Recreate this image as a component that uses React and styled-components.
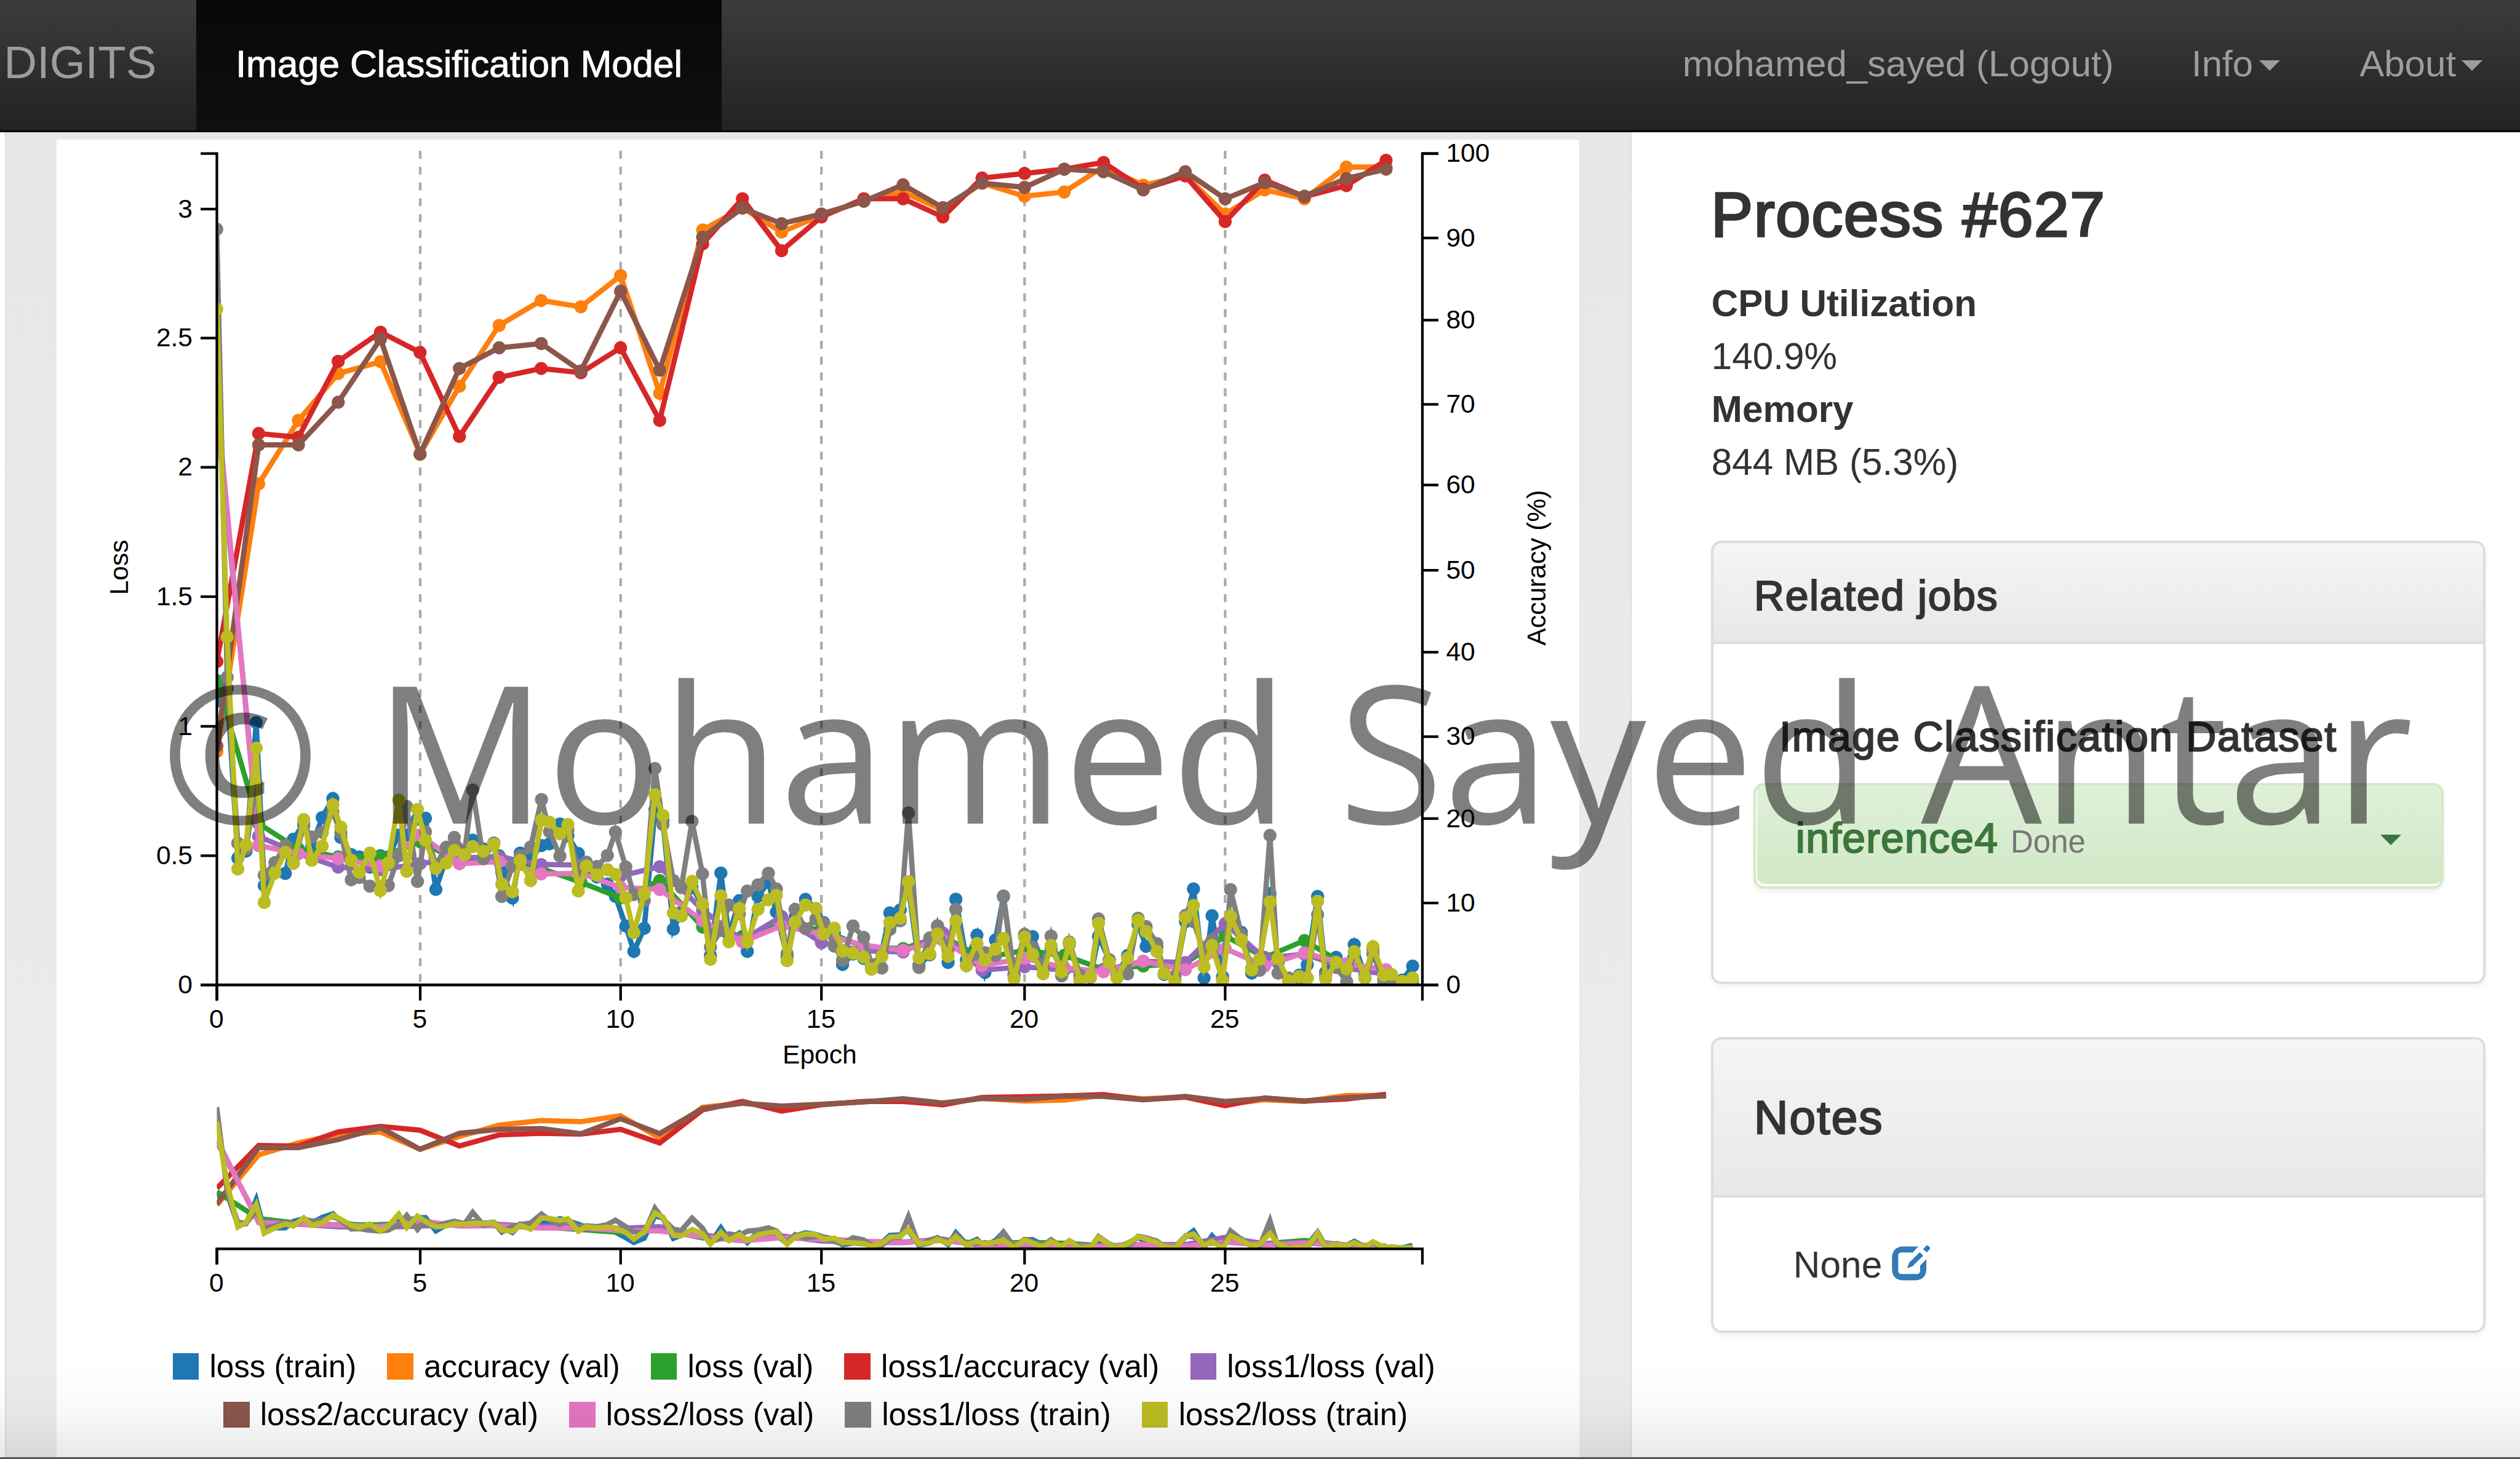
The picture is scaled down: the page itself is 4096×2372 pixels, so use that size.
import React from 'react';
import styled, { createGlobalStyle } from 'styled-components';

const Global = createGlobalStyle`
  html { font-size: 68.6442px; }
  body { margin: 0; background: #fff; color: #333; font-family: "Liberation Sans", Arial, sans-serif; }
  * { box-sizing: border-box; }
`;

const Page = styled.div`
  position: relative;
  display: flex;
  flex-direction: column;
  width: 100vw;
  height: 100vh;
  overflow: hidden;
  font-size: 0.877rem;
`;

/* ---------- navbar ---------- */
const Navbar = styled.nav`
  display: flex;
  flex: none;
  height: 3.13rem;
  border-bottom: 0.05rem solid #080808;
  background: linear-gradient(#3c3c3c, #222);
  color: #9d9d9d;
`;
const Brand = styled.div`
  display: flex;
  align-items: center;
  width: 4.65rem;
  padding: 0 0 0.12rem 0.09rem;
  font-size: 1.085rem;
`;
const NavLink = styled.div`
  display: flex;
  align-items: center;
  justify-content: ${(p) => (p.$active ? 'center' : 'flex-start')};
  width: ${(p) => p.$width}rem;
  padding-bottom: 0.06rem;
  white-space: nowrap;
  font-size: ${(p) => (p.$active ? 0.885 : 0.875)}rem;
  -webkit-text-stroke: ${(p) => (p.$active ? 0.016 : 0)}em currentColor;
  color: ${(p) => (p.$active ? '#fff' : 'inherit')};
  background: ${(p) => (p.$active ? 'linear-gradient(#080808, #0f0f0f)' : 'none')};
`;
const NavRight = styled.div`
  display: flex;
  margin-left: auto;
`;
const Caret = styled.span`
  flex: none;
  width: 0;
  height: 0;
  margin-left: ${(p) => p.$gap || 0}rem;
  margin-top: 0.09rem;
  border-left: 0.25rem solid transparent;
  border-right: 0.25rem solid transparent;
  border-top: 0.25rem solid currentColor;
`;

/* ---------- body ---------- */
const Main = styled.main`
  display: flex;
  flex: 1;
  min-height: 0;
`;
const Well = styled.section`
  flex: none;
  width: 38.53rem;
  margin-left: 0.11rem;
  padding: 0.17rem 1.23rem 0 1.2rem;
  border-left: 0.04rem solid #dedede;
  border-right: 0.04rem solid #dcdcdc;
  background: linear-gradient(#e7e7e7, #ececec);
`;
const ChartCard = styled.div`
  height: 100%;
  width: 36.06rem;
  background: #fff;
`;
const ChartSvg = styled.svg`
  display: block;
  width: 36.06rem;
  height: 28rem;
  font-family: "Liberation Sans", Arial, sans-serif;
  font-size: 62px;
`;
const Legend = styled.div`
  display: flex;
  flex-direction: column;
  gap: 0.3rem;
  padding-top: 0.645rem;
`;
const LegendRow = styled.div`
  display: flex;
  gap: 0.73rem;
  padding-left: ${(p) => p.$indent}rem;
`;
const LegendItem = styled.div`
  display: flex;
  align-items: center;
  gap: 0.25rem;
  height: 0.84rem;
  font-size: 0.746rem;
  color: #000;
  white-space: nowrap;
`;
const Swatch = styled.span`
  width: 0.62rem;
  height: 0.62rem;
  background: ${(p) => p.$color};
`;

/* ---------- sidebar ---------- */
const Sidebar = styled.aside`
  width: 20.23rem;
  padding: 1.135rem 0 0 1.875rem;
`;
const Heading = styled.h3`
  margin: 0;
  font-size: ${(p) => p.$size}rem;
  font-weight: 400;
  line-height: 1.1;
  letter-spacing: ${(p) => p.$track}em;
  white-space: nowrap;
  -webkit-text-stroke: 0.032em currentColor;
`;
const Stats = styled.dl`
  margin: 0.67rem 0 1.225rem 0.01rem;
  line-height: 1.25rem;
`;
const Term = styled.dt`
  font-weight: 700;
`;
const Value = styled.dd`
  margin: 0;
`;
const Panel = styled.section`
  width: 18.34rem;
  height: ${(p) => p.$height}rem;
  margin-bottom: 1.26rem;
  border: 0.06rem solid #ddd;
  border-radius: 0.25rem;
  box-shadow: 0 0.06rem 0.12rem rgba(0, 0, 0, 0.05);
  background: #fff;
`;
const PanelHead = styled.header`
  height: ${(p) => p.$height}rem;
  padding: ${(p) => p.$top}rem 0 0 0.96rem;
  border-bottom: 0.06rem solid #ddd;
  border-radius: 0.19rem 0.19rem 0 0;
  background: linear-gradient(#f5f5f5, #e8e8e8);
`;
const JobGroup = styled.div`
  padding: 1.65rem 0.94rem 0;
`;
const JobTitle = styled.div`
  padding: 0 0 0.56rem 0.62rem;
`;
const JobItem = styled.a`
  display: flex;
  align-items: center;
  height: 2.5rem;
  padding: 0.1rem 0.94rem 0 0.95rem;
  border: 0.06rem solid #d6e9c6;
  border-radius: 0.25rem;
  color: #3c763d;
  background: linear-gradient(#dff0d8, #d0e9c6);
  box-shadow: inset 0.03rem -0.06rem 0 #fafdf8, 0 0.06rem 0.12rem rgba(0, 0, 0, 0.06);
`;
const JobLabel = styled.div`
  display: flex;
  flex: 1;
  align-items: baseline;
  gap: 0.285rem;
`;
const JobStatus = styled.small`
  font-size: 0.744rem;
  color: #777;
`;
const NoteBody = styled.div`
  display: flex;
  align-items: center;
  height: 1.257rem;
  margin: 0.95rem 0 0 1.89rem;
  font-size: 0.88rem;
`;
const EditIcon = styled.svg`
  width: 0.94rem;
  height: 0.84rem;
  margin: 0 0 0.08rem 0.21rem;
`;

/* ---------- overlays ---------- */
const Watermark = styled.div`
  position: absolute;
  left: 3.8rem;
  top: 14.657rem;
  display: flex;
  gap: 1.285rem;
  font-family: "Open Sans", "Noto Sans", sans-serif;
  font-size: 4.54rem;
  line-height: 1.3618;
  white-space: nowrap;
  color: rgba(0, 0, 0, 0.5);
  pointer-events: none;
`;
const BottomShade = styled.div`
  position: absolute;
  left: 0;
  right: 0;
  bottom: 0;
  height: 2.3rem;
  border-bottom: 0.05rem solid #5a5658;
  background: linear-gradient(rgba(0, 0, 0, 0), rgba(0, 0, 0, 0.025) 50%, rgba(0, 0, 0, 0.085));
  pointer-events: none;
`;

/* ---------- chart data (chart units) ---------- */
const X0 = 513.5;
const X1 = 3368;
const Y0 = 2333;

const epochX = [
  513.5, 612.5, 706.6, 800.8, 901, 994.6, 1087.8, 1181.9, 1281.4, 1375.5, 1469.5, 1562, 1663.8, 1757.9, 1850.7,
  1945, 2045.5, 2138.4, 2232.5, 2325.3, 2426, 2520, 2613, 2707, 2806.5, 2901, 2994.7, 3088.8, 3188, 3282,
];

const val = {
  accuracy: [1780, 1146, 996, 885, 857, 1075, 915, 771, 712, 727, 653, 932, 545, 493, 550, 510, 475, 455, 498, 434, 465, 455, 395, 439, 416, 507, 450, 471, 396, 396],
  loss: [1612, 1951, 2011, 2030, 2030, 1994, 2040, 2027, 2057, 2090, 2127, 2086, 2196, 2218, 2191, 2202, 2243, 2247, 2217, 2270, 2251, 2263, 2296, 2288, 2282, 2217, 2268, 2228, 2287, 2300],
  accuracy1: [1567, 1027, 1036, 856, 787, 835, 1034, 894, 873, 883, 824, 996, 578, 471, 594, 514, 471, 471, 514, 422, 411, 401, 385, 448, 417, 525, 427, 466, 440, 380],
  loss1: [980, 1981, 2022, 2054, 2060, 2046, 2032, 2030, 2048, 2049, 2075, 2053, 2156, 2227, 2171, 2233, 2252, 2255, 2210, 2298, 2290, 2298, 2298, 2277, 2280, 2188, 2270, 2260, 2293, 2308],
  accuracy2: [1767, 1054, 1054, 953, 803, 1076, 873, 824, 814, 879, 690, 877, 562, 493, 530, 507, 477, 438, 492, 434, 444, 401, 407, 450, 407, 471, 433, 465, 423, 401],
  loss2: [950, 2003, 2022, 2034, 2051, 1978, 2046, 2041, 2070, 2069, 2102, 2107, 2181, 2231, 2193, 2212, 2239, 2251, 2227, 2287, 2270, 2292, 2302, 2277, 2297, 2247, 2288, 2257, 2283, 2297],
};

/* Training samples in blocks: [x, loss, loss1, loss2], each block with its own origin and step. */
const trainBlocks = [
  {
    ox: 450, oy: 1550, sx: 0.574, sy: 0.5421,
    rows: [
      [110, 205, -1857, -1508], [153, 150, 100, -76], [197, 890, 825, 938], [231, 860, 850, 833], [273, 298, 560, 410],
      [306, 1010, 965, 1084], [350, 955, 910, 955], [393, 957, 835, 865], [426, 808, 912, 912], [469, 740, 750, 722],
      [502, 840, 798, 900], [545, 713, 778, 838], [589, 630, 690, 658], [622, 800, 780, 755], [665, 875, 985, 900],
      [698, 885, 975, 952], [742, 930, 1013, 868], [785, 880, 1030, 1032], [818, 885, 1010, 912], [861, 790, 880, 637],
      [894, 790, 665, 948], [938, 720, 992, 678], [971, 716, 775, 812], [1014, 1027, 920, 935], [1057, 890, 843, 912],
      [1090, 850, 800, 857], [1133, 870, 860, 875], [1166, 812, 593, 840], [1210, 850, 893, 860], [1253, 825, 825, 830],
      [1286, 950, 1058, 1005], [1330, 1065, 925, 1037], [1362, 868, 880, 900], [1405, 895, 842, 988],
    ],
  },
  {
    ox: 1250, oy: 1750, sx: 0.574, sy: 0.4145,
    rows: [
      [56, 610, 347, 465], [89, 600, 530, 477], [132, 487, 670, 543], [165, 555, 520, 490], [208, 655, 750, 870],
      [241, 745, 705, 728], [285, 790, 730, 778], [328, 830, 667, 748], [361, 900, 533, 775], [404, 1070, 733, 910],
      [437, 1215, 890, 1108], [480, 1083, 925, 885], [524, 405, 170, 320], [557, 465, 490, 438], [600, 1088, 810, 995],
      [633, 990, 850, 1013], [677, 850, 472, 815], [720, 950, 772, 945], [753, 1240, 1190, 1260], [796, 767, 1095, 897],
      [829, 1120, 950, 1160], [872, 925, 1000, 970], [905, 1215, 870, 1160], [949, 900, 835, 975], [992, 820, 768, 920],
      [1025, 990, 858, 895], [1069, 1245, 1228, 1268], [1102, 1020, 975, 1048], [1145, 918, 1085, 950], [1188, 970, 1030, 970],
      [1220, 1050, 1055, 1115], [1264, 1110, 1185, 1082], [1298, 1290, 1265, 1213], [1341, 1230, 1070, 1225],
      [1385, 1255, 1135, 1248], [1417, 1310, 1290, 1317], [1460, 1220, 1310, 1243], [1493, 995, 1090, 1050], [1536, 978, 1040, 1025],
    ],
  },
  {
    ox: 2050, oy: 1900, sx: 0.5102, sy: 0.3333,
    rows: [
      [198, 600, 77, 565], [247, 1160, 1175, 1107], [297, 1085, 965, 1078], [333, 880, 880, 937], [382, 1140, 1050, 1095],
      [418, 690, 762, 845], [467, 1120, 1160, 1163], [516, 945, 1080, 1005], [553, 1210, 1070, 1122], [602, 980, 1090, 1045],
      [639, 672, 667, 970], [688, 1230, 1220, 1255], [737, 950, 940, 960], [774, 955, 1030, 1083], [823, 1150, 1170, 1220],
      [860, 1040, 952, 1020], [909, 1190, 1235, 1205], [945, 1010, 995, 1003], [994, 1260, 1230, 1270], [1043, 1240, 1245, 1240],
      [1080, 955, 830, 862], [1130, 1120, 1120, 1137], [1166, 1230, 1240, 1250], [1215, 1090, 1220, 1108], [1264, 870, 825, 840],
      [1301, 1025, 885, 920], [1351, 1030, 1005, 1062], [1385, 1225, 1215, 1218], [1435, 1260, 1235, 1275], [1484, 850, 805, 820],
      [1521, 617, 850, 735],
    ],
  },
  {
    ox: 2750, oy: 1900, sx: 0.5102, sy: 0.3333,
    rows: [
      [198, 1250, 1070, 1170], [235, 807, 980, 1020], [284, 1240, 1260, 1270], [321, 830, 622, 812], [371, 925, 940, 980],
      [419, 1215, 1185, 1193], [456, 1130, 1195, 1115], [504, 650, 237, 710], [541, 1140, 1215, 1110], [590, 1255, 1250, 1270],
      [640, 1230, 1250, 1240], [677, 1155, 1250, 1250], [725, 670, 800, 705], [762, 1210, 1230, 1258], [811, 1103, 1175, 1138],
      [860, 1170, 1275, 1185], [895, 1012, 1070, 1063], [945, 1230, 1250, 1245], [982, 1045, 1080, 1028], [1032, 1255, 1275, 1230],
      [1068, 1240, 1280, 1225], [1118, 1265, 1285, 1275], [1166, 1165, 1270, 1250],
    ],
  },
];

const train = (column) =>
  trainBlocks.flatMap((b) => b.rows.map((r) => [b.ox + r[0] * b.sx, b.oy + r[column] * b.sy]));
const perEpoch = (ys) => ys.map((y, i) => [epochX[i], y]);

const series = [
  { name: 'loss (train)', color: '#1f77b4', points: train(1) },
  { name: 'accuracy (val)', color: '#ff7f0e', points: perEpoch(val.accuracy) },
  { name: 'loss (val)', color: '#2ca02c', points: perEpoch(val.loss) },
  { name: 'loss1/accuracy (val)', color: '#d62728', points: perEpoch(val.accuracy1) },
  { name: 'loss1/loss (val)', color: '#9467bd', points: perEpoch(val.loss1) },
  { name: 'loss2/accuracy (val)', color: '#8c564b', points: perEpoch(val.accuracy2) },
  { name: 'loss2/loss (val)', color: '#e377c2', points: perEpoch(val.loss2) },
  { name: 'loss1/loss (train)', color: '#7f7f7f', points: train(2) },
  { name: 'loss2/loss (train)', color: '#bcbd22', points: train(3) },
];

const xTicks = [[0, 513.5], [5, 995], [10, 1469.5], [15, 1945], [20, 2426], [25, 2901]];
const lossTicks = [['3', 495.5], ['2.5', 801], ['2', 1107], ['1.5', 1413.5], ['1', 1720.5], ['0.5', 2027], ['0', 2333]];
const accTicks = [[100, 364], [90, 564], [80, 758.5], [70, 958], [60, 1149], [50, 1351], [40, 1545], [30, 1745], [20, 1939], [10, 2139], [0, 2333]];

const MINI_Y = 2958;
const MINI_SCALE = 0.1875;
const toPath = (pts) => pts.map((p, i) => `${i ? 'L' : 'M'}${p[0].toFixed(1)},${p[1].toFixed(1)}`).join('');

function Series({ color, points }) {
  return (
    <g>
      <path d={toPath(points)} fill="none" stroke={color} strokeWidth="12.4" />
      {points.map(([x, y], i) => (
        <circle key={i} cx={x} cy={y} r="15.5" fill={color} />
      ))}
    </g>
  );
}

function XAxis({ y }) {
  return (
    <g>
      <path d={`M${X0},${y + 37}V${y}H${X1}V${y + 37}`} fill="none" stroke="#000" strokeWidth="6.2" />
      {xTicks.map(([label, x]) => (
        <g key={label}>
          <path d={`M${x},${y}v37`} stroke="#000" strokeWidth="6.2" />
          <text x={x - 1} y={y + 101} textAnchor="middle">{label}</text>
        </g>
      ))}
    </g>
  );
}

function Chart() {
  return (
    <ChartSvg viewBox="134 331 3606 2800" stroke="none">
      <defs>
        <clipPath id="plot"><rect x={X0} y="340" width={X1 - X0} height={Y0 - 340} /></clipPath>
        <clipPath id="mini"><rect x={X0} y="2560" width={X1 - X0} height={MINI_Y - 2560} /></clipPath>
      </defs>
      {xTicks.slice(1).map(([label, x]) => (
        <path key={label} d={`M${x},357.5V${Y0}`} stroke="#aaa" strokeWidth="6.2" strokeDasharray="18.75 18.75" />
      ))}
      <g clipPath="url(#plot)">
        {series.map((s) => <Series key={s.name} {...s} />)}
      </g>
      <XAxis y={Y0} />
      <text x="1941" y="2519" textAnchor="middle">Epoch</text>

      <path d={`M475,364H${X0}V${Y0}H475`} fill="none" stroke="#000" strokeWidth="6.2" />
      {lossTicks.map(([label, y]) => (
        <g key={label}>
          <path d={`M475,${y}H${X0}`} stroke="#000" strokeWidth="6.2" />
          <text x="456" y={y + 20} textAnchor="end">{label}</text>
        </g>
      ))}
      <text transform="translate(303 1344) rotate(-90)" textAnchor="middle">Loss</text>

      <path d={`M3406,364H${X1}V${Y0}H3406`} fill="none" stroke="#000" strokeWidth="6.2" />
      {accTicks.map(([label, y]) => (
        <g key={label}>
          <path d={`M${X1},${y}H3406`} stroke="#000" strokeWidth="6.2" />
          <text x="3424" y={y + 20}>{label}</text>
        </g>
      ))}
      <text transform="translate(3660 1345) rotate(-90)" textAnchor="middle">Accuracy (%)</text>

      <g clipPath="url(#mini)">
        {series.map((s) => (
          <path
            key={s.name}
            d={toPath(s.points.map(([x, y]) => [x, MINI_Y - (Y0 - y) * MINI_SCALE]))}
            fill="none"
            stroke={s.color}
            strokeWidth="12.4"
          />
        ))}
      </g>
      <XAxis y={MINI_Y} />
    </ChartSvg>
  );
}

function LegendLine({ items, indent }) {
  return (
    <LegendRow $indent={indent}>
      {items.map((s) => (
        <LegendItem key={s.name}>
          <Swatch $color={s.color} />
          {s.name}
        </LegendItem>
      ))}
    </LegendRow>
  );
}

export default function App() {
  return (
    <Page>
      <Global />
      <Navbar>
        <Brand>DIGITS</Brand>
        <NavLink $active $width={12.44}>Image Classification Model</NavLink>
        <NavRight>
          <NavLink $width={12.05}>mohamed_sayed (Logout)</NavLink>
          <NavLink $width={3.98}>Info<Caret $gap={0.15} /></NavLink>
          <NavLink $width={3.8}>About<Caret $gap={0.13} /></NavLink>
        </NavRight>
      </Navbar>
      <Main>
        <Well>
          <ChartCard>
            <Chart />
            <Legend>
              <LegendLine items={series.slice(0, 5)} indent={2.75} />
              <LegendLine items={series.slice(5)} indent={3.95} />
            </Legend>
          </ChartCard>
        </Well>
        <Sidebar>
          <Heading $size={1.49} $track={0.013}>Process #627</Heading>
          <Stats>
            <Term>CPU Utilization</Term>
            <Value>140.9%</Value>
            <Term>Memory</Term>
            <Value>844 MB (5.3%)</Value>
          </Stats>
          <Panel $height={10.51}>
            <PanelHead $height={2.39} $top={0.7}>
              <Heading as="h4" $size={0.99} $track={0.024}>Related jobs</Heading>
            </PanelHead>
            <JobGroup>
              <JobTitle>
                <Heading as="h4" $size={0.99} $track={0.024}>Image Classification Dataset</Heading>
              </JobTitle>
              <JobItem>
                <JobLabel>
                  <Heading as="span" $size={0.99} $track={0.018}>inference4</Heading>
                  <JobStatus>Done</JobStatus>
                </JobLabel>
                <Caret />
              </JobItem>
            </JobGroup>
          </Panel>
          <Panel $height={7}>
            <PanelHead $height={3.74} $top={1.23}>
              <Heading as="h4" $size={1.116} $track={0.028}>Notes</Heading>
            </PanelHead>
            <NoteBody>
              None
              <EditIcon viewBox="740 79 281 252" fill="#337ab7">
                <path d="M932 90H826C775 90 745 120 745 171V249C745 300 775 330 826 330H908C959 330 989 300 989 249V181L945 225V262Q945 286 921 286H813Q789 286 789 262V156Q789 132 813 132H893Z" />
                <path d="M942 130L967 155L890 231L853 245L866 206Z" />
                <path d="M966 108L987 86Q994 79 1002 85L1013 95Q1019 101 1013 109L991 132Z" />
              </EditIcon>
            </NoteBody>
          </Panel>
        </Sidebar>
      </Main>
      <BottomShade />
      <Watermark>
        <span>©</span>
        <span>Mohamed Sayed Antar</span>
      </Watermark>
    </Page>
  );
}
